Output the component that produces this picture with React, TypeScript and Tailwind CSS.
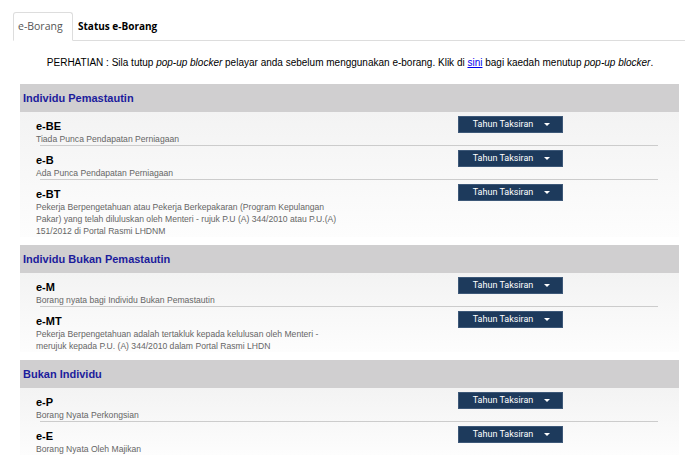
import React from "react";

interface FormRow {
  code: string;
  desc: string;
}

interface Section {
  title: string;
  rows: FormRow[];
}

const sections: Section[] = [
  {
    title: "Individu Pemastautin",
    rows: [
      { code: "e-BE", desc: "Tiada Punca Pendapatan Perniagaan" },
      { code: "e-B", desc: "Ada Punca Pendapatan Perniagaan" },
      {
        code: "e-BT",
        desc: "Pekerja Berpengetahuan atau Pekerja Berkepakaran (Program Kepulangan Pakar) yang telah diluluskan oleh Menteri - rujuk P.U (A) 344/2010 atau P.U.(A) 151/2012 di Portal Rasmi LHDNM",
      },
    ],
  },
  {
    title: "Individu Bukan Pemastautin",
    rows: [
      { code: "e-M", desc: "Borang nyata bagi Individu Bukan Pemastautin" },
      {
        code: "e-MT",
        desc: "Pekerja Berpengetahuan adalah tertakluk kepada kelulusan oleh Menteri - merujuk kepada P.U. (A) 344/2010 dalam Portal Rasmi LHDN",
      },
    ],
  },
  {
    title: "Bukan Individu",
    rows: [
      { code: "e-P", desc: "Borang Nyata Perkongsian" },
      { code: "e-E", desc: "Borang Nyata Oleh Majikan" },
    ],
  },
];

function YearButton() {
  return (
    <button className="flex h-[17px] w-[105px] items-center justify-center gap-[11px] border border-[#3d5878] bg-[#1d3a5c] pl-[2px] font-['Roboto',sans-serif] text-[9px] text-white">
      <span>Tahun Taksiran</span>
      <span className="h-0 w-0 border-x-[3px] border-t-[3px] border-x-transparent border-t-white" />
    </button>
  );
}

export default function App() {
  return (
    <div className="min-h-screen bg-white font-['Liberation_Sans',Arial,sans-serif]">
      {/* Tabs */}
      <div className="pt-[12px] pl-[13px] pr-[15px]">
        <div className="flex border-b border-[#dddddd]">
          <div className="-mb-px flex h-[29px] w-[60px] items-center rounded-t-[3px] border border-b-white border-[#dddddd] bg-white pl-[4px] font-['Open_Sans',sans-serif] text-[10.5px] text-[#555555]">
            e-Borang
          </div>
          <div className="flex h-[28px] items-center pl-[5px] font-['Open_Sans',sans-serif] text-[10px] font-bold text-black">
            Status e-Borang
          </div>
        </div>
      </div>

      {/* Notice */}
      <p className="mt-[15px] text-center text-[10px] leading-[13px] text-black">
        PERHATIAN : Sila tutup <i>pop-up blocker</i> pelayar anda sebelum
        menggunakan e-borang. Klik di{" "}
        <a href="#" className="text-[#0000ee] underline">
          sini
        </a>{" "}
        bagi kaedah menutup <i>pop-up blocker</i>.
      </p>

      {/* Sections */}
      <div className="mt-[15px] ml-[20px] mr-[21px]">
        {sections.map((section) => (
          <div key={section.title} className="mb-[8px]">
            <div className="flex h-[28px] items-center bg-[#d0cfd0] pl-[3px] text-[11px] font-bold text-[#1c1c9c]">
              {section.title}
            </div>
            <div className="bg-gradient-to-b from-[#f3f3f3] to-[#fdfdfd]">
              {section.rows.map((row, idx) => (
                <div key={row.code}>
                  <div className="flex">
                    <div className="w-[438px] pl-[16px] pt-[8px]">
                      <div className="text-[11px] font-bold leading-[13px] text-black">
                        {row.code}
                      </div>
                      <div className="w-[305px] text-[8.6px] leading-[12px] text-[#666666]">
                        {row.desc}
                      </div>
                    </div>
                    <div className="pt-[4px]">
                      <YearButton />
                    </div>
                  </div>
                  {idx < section.rows.length - 1 && (
                    <div className="ml-[20px] h-px w-[618px] bg-[#cccccc]" />
                  )}
                </div>
              ))}
            </div>
          </div>
        ))}
      </div>
    </div>
  );
}
